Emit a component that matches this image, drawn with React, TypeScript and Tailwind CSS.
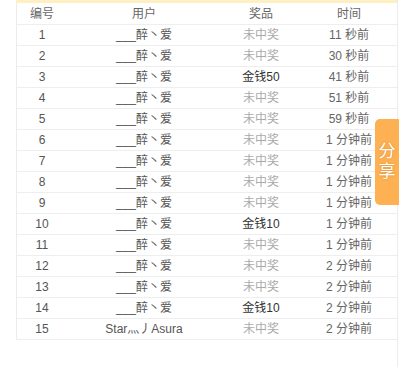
import React from 'react';

interface Row {
  no: number;
  user: string;
  prize: string;
  time: string;
}

const rows: Row[] = [
  { no: 1, user: '___醉丶爱', prize: '未中奖', time: '11 秒前' },
  { no: 2, user: '___醉丶爱', prize: '未中奖', time: '30 秒前' },
  { no: 3, user: '___醉丶爱', prize: '金钱50', time: '41 秒前' },
  { no: 4, user: '___醉丶爱', prize: '未中奖', time: '51 秒前' },
  { no: 5, user: '___醉丶爱', prize: '未中奖', time: '59 秒前' },
  { no: 6, user: '___醉丶爱', prize: '未中奖', time: '1 分钟前' },
  { no: 7, user: '___醉丶爱', prize: '未中奖', time: '1 分钟前' },
  { no: 8, user: '___醉丶爱', prize: '未中奖', time: '1 分钟前' },
  { no: 9, user: '___醉丶爱', prize: '未中奖', time: '1 分钟前' },
  { no: 10, user: '___醉丶爱', prize: '金钱10', time: '1 分钟前' },
  { no: 11, user: '___醉丶爱', prize: '未中奖', time: '1 分钟前' },
  { no: 12, user: '___醉丶爱', prize: '未中奖', time: '2 分钟前' },
  { no: 13, user: '___醉丶爱', prize: '未中奖', time: '2 分钟前' },
  { no: 14, user: '___醉丶爱', prize: '金钱10', time: '2 分钟前' },
  { no: 15, user: 'Star灬丿Asura', prize: '未中奖', time: '2 分钟前' },
];

const App: React.FC = () => {
  return (
    <div
      className="relative flex w-[399px] h-[367px] bg-white overflow-hidden text-[12px] text-[#555]"
      style={{ fontFamily: '"Liberation Sans", "Noto Sans CJK SC", sans-serif' }}
    >
      <div className="w-4 flex-shrink-0"></div>

      <div className="w-[382px] h-full border-r border-[#ececec]">
        {/* top bar */}
        <div className="h-[3px] bg-[#fdf1c4]"></div>

        <div className="border-l border-[#ececec]">
          {/* header */}
          <div className="flex h-[22px] items-center border-b border-[#eeeeee] text-[#666]">
            <div className="w-[50px] text-center">编号</div>
            <div className="w-[154px] text-center">用户</div>
            <div className="w-[80px] text-center">奖品</div>
            <div className="flex-1 text-center">时间</div>
          </div>

          {rows.map((row) => (
            <div key={row.no} className="flex h-[21px] items-center border-b border-[#eeeeee]">
              <div className="w-[50px] text-center text-[#555]">{row.no}</div>
              <div className="w-[154px] text-center text-[#555]">{row.user}</div>
              <div className={`w-[80px] text-center ${row.prize === '未中奖' ? 'text-[#aaaaaa]' : 'text-[#333]'}`}>
                {row.prize}
              </div>
              <div className="flex-1 text-center text-[#666]">{row.time}</div>
            </div>
          ))}
        </div>
      </div>

      {/* share tab */}
      <div className="absolute right-0 top-[119px] w-[24px] h-[86px] bg-[#fdb152] rounded-l-[5px] flex flex-col items-center justify-center text-white text-[17px] leading-[20px] [text-shadow:0_0_2px_rgba(180,100,0,0.5)]">
        <span>分</span>
        <span>享</span>
      </div>
    </div>
  );
};

export default App;
